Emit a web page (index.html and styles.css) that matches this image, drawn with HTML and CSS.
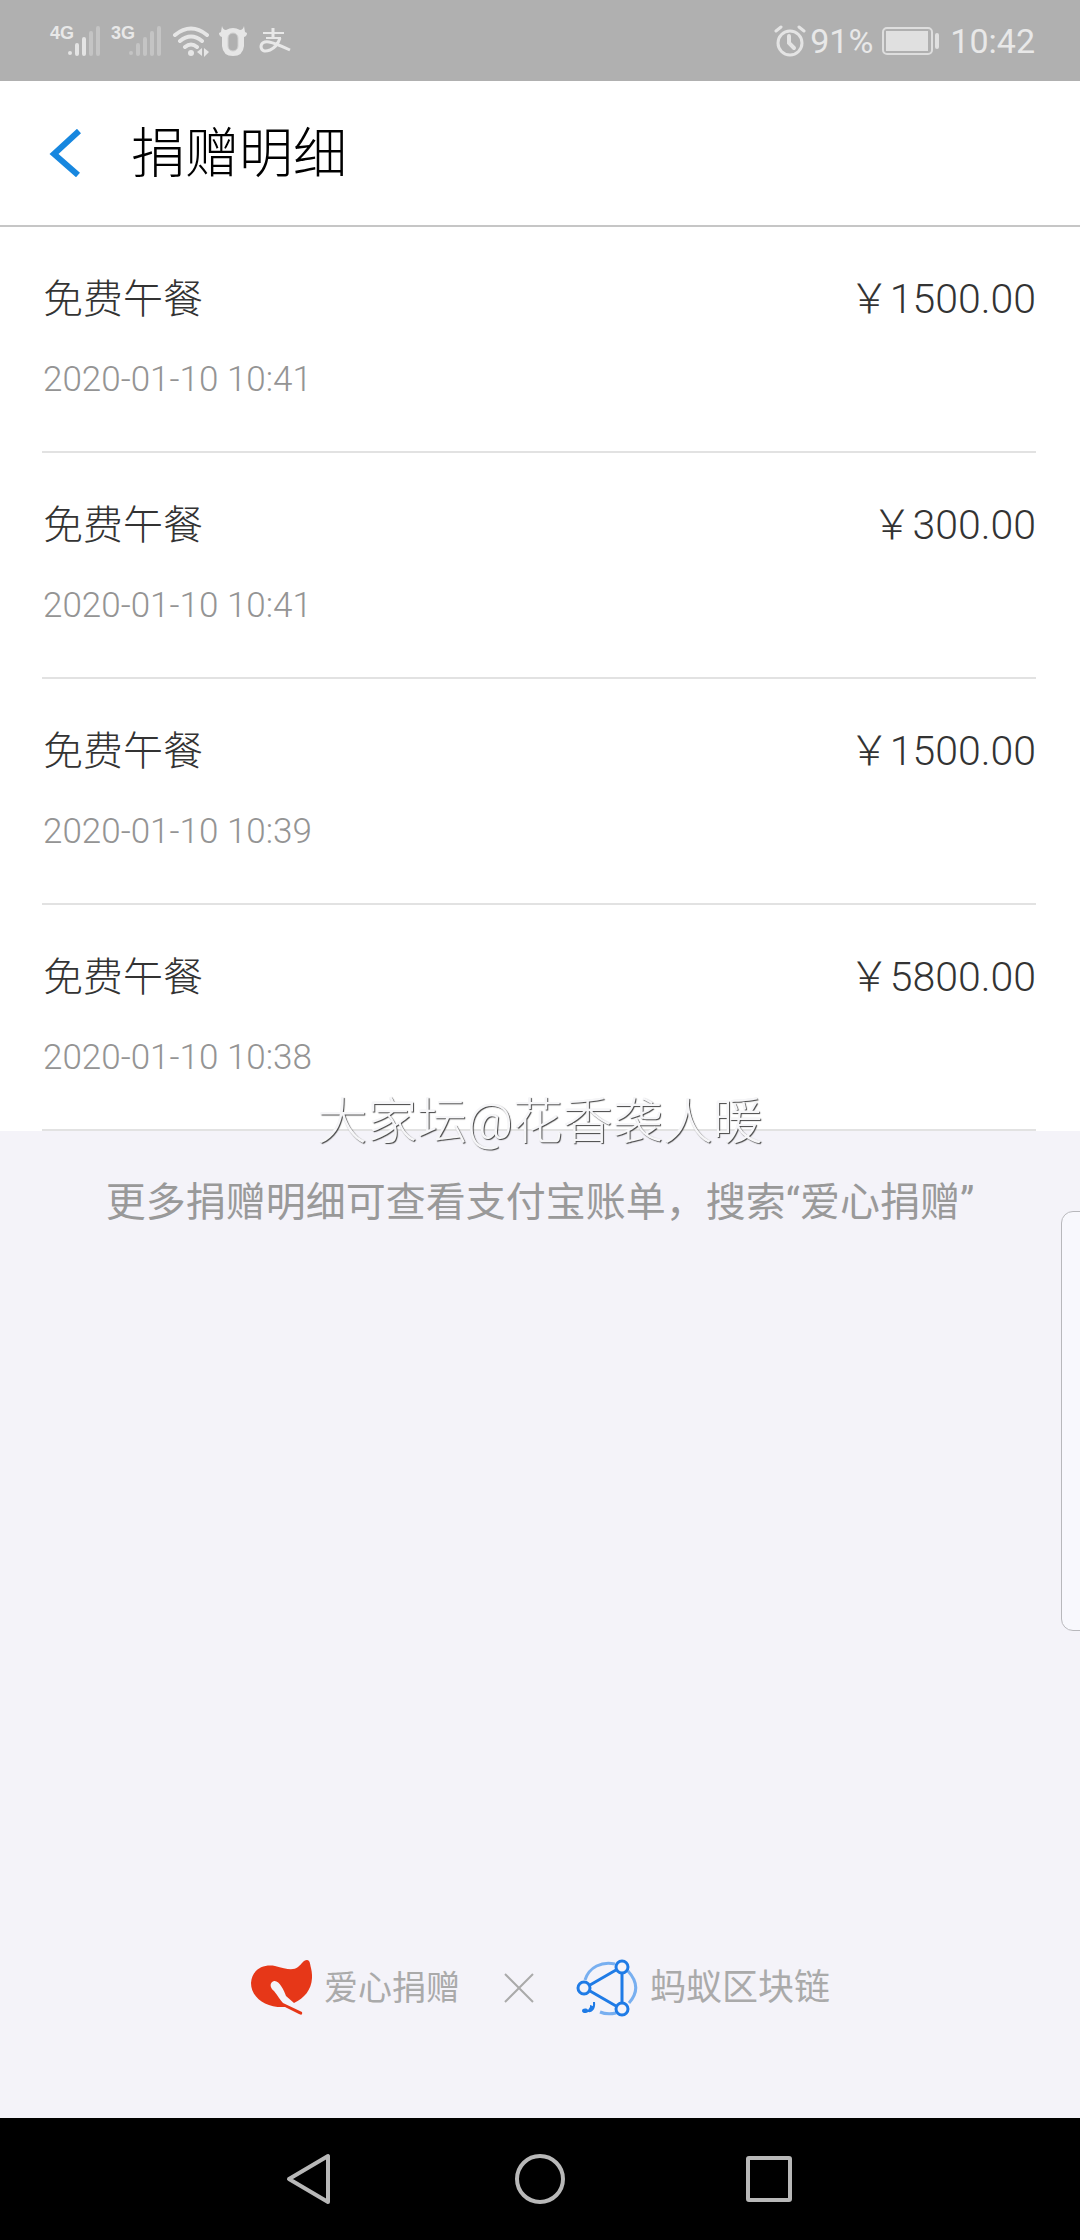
FILE: index.html
```html
<!DOCTYPE html>
<html lang="zh-CN">
<head>
    <meta charset="UTF-8">
    <meta name="viewport" content="width=device-width, initial-scale=1.0">
    <title>捐赠明细</title>
    <link rel="stylesheet" href="styles.css">
</head>
<body>
    <div class="status-bar">
        <div class="status-group">
            <div class="signal">
                <span class="signal-type">4G</span>
                <svg width="34" height="32" viewBox="0 0 34 32" stroke-width="4" stroke-linecap="round" stroke="#e4e4e4">
                    <path d="M3 28v0M10 20v9M17 14v15"/>
                    <path d="M24 8v21M31 3v26" stroke="#c4c4c4"/>
                </svg>
            </div>
            <div class="signal">
                <span class="signal-type">3G</span>
                <svg width="34" height="32" viewBox="0 0 34 32" stroke-width="4" stroke-linecap="round" stroke="#c4c4c4">
                    <path d="M3 28v0M10 20v9M17 14v15M24 8v21M31 3v26"/>
                </svg>
            </div>
            <svg class="wifi" width="38" height="32" viewBox="0 0 38 32" fill="none" stroke="#e6e6e6" stroke-width="4" stroke-linecap="round">
                <path d="M3 10Q19 -3 35 10M8 16Q19 7 30 16M13 22Q19 17 25 22"/>
                <circle cx="19" cy="28" r="3" fill="#e6e6e6" stroke="none"/>
                <path d="M30 23v8l-5-4zM32 23l5 4-5 5z" fill="#e6e6e6" stroke="none"/>
            </svg>
            <svg class="ox" width="28" height="32" viewBox="0 0 28 32">
                <path d="M3 1Q4 5 7 5Q14 1 21 5Q24 5 25 1L26 7L28 8Q28 11 25 12V21Q24 31 14 31Q4 31 3 21V12Q0 11 0 8L2 7Z" fill="#e6e6e6"/>
                <rect x="9" y="8" width="10" height="18" rx="5" fill="#b0b0b0" stroke="#cfcfcf" stroke-width="1"/>
            </svg>
            <svg width="32" height="28" viewBox="0 0 32 28" fill="none" stroke="#e8e8e8" stroke-width="2">
                <path d="M4 6h21M7 11h15"/>
                <path d="M14 1v10" stroke-width="3"/>
                <path d="M21 11Q18 20 11 23Q3 26 2 20Q2 14 10 15Q16 16 31 23" stroke-width="3"/>
            </svg>
        </div>
        <div class="status-group">
            <svg width="32" height="32" viewBox="0 0 32 32" fill="none" stroke="#e4e4e4" stroke-width="3" stroke-linecap="round">
                <circle cx="16" cy="18" r="12"/>
                <path d="M2 6l5-4M30 6l-5-4"/>
                <path d="M15 11v7l5 5" stroke-width="4"/>
            </svg>
            <span class="battery-level">91%</span>
            <svg class="battery" width="58" height="28" viewBox="0 0 58 28">
                <rect x="1" y="1" width="49" height="26" rx="4" fill="none" stroke="#dedede" stroke-width="2"/>
                <rect x="4" y="4" width="42" height="20" fill="#e0e0e0"/>
                <rect x="53" y="6" width="4" height="16" rx="2" fill="#e0e0e0"/>
            </svg>
            <span>10:42</span>
        </div>
    </div>

    <header class="title-bar">
        <button class="back-button" aria-label="返回">
            <svg width="32" height="48" viewBox="0 0 32 48" fill="none" stroke="#1787df" stroke-width="6">
                <path d="M30 2L5 25L29 46"/>
            </svg>
        </button>
        <h1>捐赠明细</h1>
    </header>

    <main>
        <ul class="donation-list">
            <li class="donation">
                <div>
                    <h2>免费午餐</h2>
                    <time>2020-01-10 10:41</time>
                </div>
                <span class="amount">￥1500.00</span>
            </li>
            <li class="donation">
                <div>
                    <h2>免费午餐</h2>
                    <time>2020-01-10 10:41</time>
                </div>
                <span class="amount">￥300.00</span>
            </li>
            <li class="donation">
                <div>
                    <h2>免费午餐</h2>
                    <time>2020-01-10 10:39</time>
                </div>
                <span class="amount">￥1500.00</span>
            </li>
            <li class="donation">
                <div>
                    <h2>免费午餐</h2>
                    <time>2020-01-10 10:38</time>
                </div>
                <span class="amount">￥5800.00</span>
            </li>
        </ul>
        <div class="more">
            <span class="watermark">大家坛@花香袭人暖</span>
            <p>更多捐赠明细可查看支付宝账单，搜索“爱心捐赠”</p>
        </div>
    </main>

    <footer class="partners">
        <div class="partner love">
            <svg width="62" height="56" viewBox="0 0 62 56">
                <path d="M1 23C2 8 15 4 25 6C36 9 43 11 48 7C52 4 53 0 57 0C60 0 60 4 61 8C65 25 57 37 44 43L36 36C34 30 29 20 24 21C19 23 20 28 24 31C28 36 30 40 33 43L52 52Q53 56 49 54L35 47C15 48 1 37 1 23Z" fill="#e63718"/>
            </svg>
            <span>爱心捐赠</span>
        </div>
        <svg class="cross" width="30" height="30" viewBox="0 0 30 30" stroke="#aaa" stroke-width="2">
            <path d="M1 1l28 28M29 1L1 29"/>
        </svg>
        <div class="partner chain">
            <svg width="62" height="58" viewBox="0 0 62 58" fill="none" stroke="#1f7be6" stroke-width="3">
                <path d="M14 26L40 11M14 32L40 47M46 14v29"/>
                <path d="M9 21C13 8 26 2 39 5M52 12C62 23 62 34 53 44M24 53Q31 56 40 54" stroke="#78aff0"/>
                <circle cx="46" cy="8" r="6"/>
                <circle cx="8" cy="29" r="6"/>
                <circle cx="46" cy="50" r="6"/>
                <path d="M6 52C6 49 11 49 12 51L14 48V46L17 47V43H19C20 50 16 54 12 53C10 55 6 54 6 52Z" fill="#1f7be6" stroke="none"/>
            </svg>
            <span>蚂蚁区块链</span>
        </div>
    </footer>

    <nav class="nav-bar">
        <button aria-label="后退">
            <svg width="52" height="52" viewBox="0 0 52 52">
                <path d="M43 3V49L4 26Z"/>
            </svg>
        </button>
        <button aria-label="主页">
            <svg width="52" height="52" viewBox="0 0 52 52">
                <circle cx="26" cy="26" r="23"/>
            </svg>
        </button>
        <button aria-label="最近任务">
            <svg width="52" height="52" viewBox="0 0 52 52">
                <rect x="5" y="5" width="42" height="42" rx="1"/>
            </svg>
        </button>
    </nav>

    <div class="edge-panel"></div>
</body>
</html>
```

FILE: styles.css
```css
* { box-sizing: border-box; }
body { display: flex; flex-direction: column; min-height: 100vh; margin: 0; background: #f4f3f9; color: #333; font-family: Roboto, "Noto Sans CJK SC", sans-serif; }
h1, h2, p, ul { margin: 0; padding: 0; font-weight: 300; }
svg { display: block; flex: none; }
button { padding: 0; border: none; background: none; cursor: pointer; }

.status-bar { display: flex; justify-content: space-between; height: 81px; padding: 0 45px 0 50px; background: #b0b0b0; color: #e8e8e8; font-size: 34px; line-height: 40px; }
.status-group { display: flex; align-items: center; }
.signal { display: flex; margin-right: 10px; }
.signal-type { width: 17px; font: bold 18px/16px "Liberation Sans Narrow", "Liberation Sans", sans-serif; }
.wifi { margin-right: 9px; }
.ox { margin-right: 12px; }
.battery-level { margin: 0 9px 0 4px; }
.battery { margin-right: 10px; }

.title-bar { display: flex; align-items: center; height: 146px; padding: 0 49px; border-bottom: 2px solid #c6c6c6; background: #fff; color: #000; }
.title-bar h1 { margin-left: 50px; padding-top: 4px; font-size: 54px; line-height: 72px; }

.donation-list { list-style: none; padding: 0 44px 0 42px; background: #fff; }
.donation { display: flex; justify-content: space-between; height: 226px; padding: 45px 0 0 1px; border-bottom: 2px solid #e2e2e2; }
.donation h2 { font-size: 40px; line-height: 56px; }
.donation time { display: block; margin-top: 28px; color: #949494; font-size: 35px; line-height: 48px; }
.amount { font-size: 41px; line-height: 54px; }

.more { position: relative; padding: 44px 40px 0; color: #999; font-size: 40px; line-height: 56px; text-align: center; }
.more p { font-weight: 400; }
.watermark { position: absolute; top: -45px; left: 0; width: 100%; color: #f6f6f8; font-size: 50px; font-weight: 300; line-height: 72px; text-shadow: 1px 1px 1px #444; }

.partners { display: flex; justify-content: center; align-items: center; margin-top: auto; padding-bottom: 101px; color: #aaa; }
.partner { display: flex; align-items: center; gap: 12px; line-height: 58px; }
.love { font-size: 34px; }
.chain { font-size: 36px; }
.cross { margin: 0 42px 0 44px; }

.nav-bar { display: flex; justify-content: center; align-items: center; gap: 177px; height: 122px; background: #000; }
.nav-bar svg { fill: none; stroke: #b8b8b8; stroke-width: 4; stroke-linejoin: round; }

/* handle of the slide-out panel */
.edge-panel { position: fixed; top: 1211px; right: -2px; width: 21px; height: 420px; border: 1px solid #b8b8bc; border-radius: 12px 0 0 12px; background: #f8f8fd; }
```
